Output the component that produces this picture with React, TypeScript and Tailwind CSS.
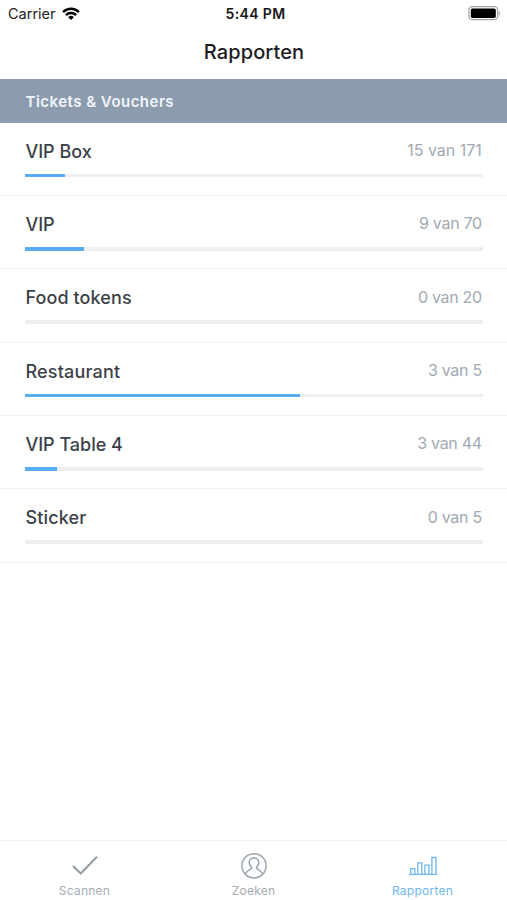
import type { ReactNode } from "react";

type Report = {
  name: string;
  scanned: number;
  total: number;
  nameClass: string;
  countClass: string;
};

const reports: Report[] = [
  { name: "VIP Box", scanned: 15, total: 171, nameClass: "", countClass: "" },
  { name: "VIP", scanned: 9, total: 70, nameClass: "", countClass: "tracking-[-0.3px]" },
  { name: "Food tokens", scanned: 0, total: 20, nameClass: "tracking-[0.1px]", countClass: "tracking-[-0.3px]" },
  { name: "Restaurant", scanned: 3, total: 5, nameClass: "tracking-[0.2px]", countClass: "tracking-[-0.3px]" },
  { name: "VIP Table 4", scanned: 3, total: 44, nameClass: "", countClass: "tracking-[-0.3px]" },
  { name: "Sticker", scanned: 0, total: 5, nameClass: "tracking-[0.15px]", countClass: "tracking-[-0.3px]" },
];

function WifiIcon() {
  return (
    <svg width="18" height="14" viewBox="0 0 18 14" fill="none" stroke="#000" strokeWidth="2.4">
      <path d="M1.1 5.1a11 11 0 0 1 15.8 0" />
      <path d="M3.9 8.1a7.2 7.2 0 0 1 10.2 0" />
      <path d="M9 13 6.2 10.2a4 4 0 0 1 5.6 0Z" fill="#000" stroke="none" />
    </svg>
  );
}

function BatteryIcon() {
  return (
    <svg width="33" height="15" viewBox="0 0 33 15" fill="none">
      <rect x="0.9" y="0.7" width="28.8" height="13" rx="3.6" stroke="#a5a5a5" strokeWidth="1.2" />
      <rect x="2.8" y="2.5" width="25" height="9.4" rx="1.6" fill="#000" />
      <path d="M30.8 5c1.6.6 1.6 4 0 4.6Z" fill="#a5a5a5" />
    </svg>
  );
}

function CheckIcon() {
  return (
    <svg width="28" height="28" viewBox="0 0 28 28" fill="none" stroke="#929da8" strokeWidth="2.1">
      <path d="M2 14 9.7 21.6 26 4.7" />
    </svg>
  );
}

function PersonIcon() {
  return (
    <svg width="28" height="28" viewBox="0 0 28 28" fill="none" stroke="#9aa4ad" strokeWidth="1.5">
      <circle cx="14" cy="13.8" r="12.1" />
      <path d="M5.8 21.3C7.2 19 9.2 18 10.9 16.9c1-.6.9-1.5.1-2.4-1.2-1.3-1.8-2.6-1.8-4.1 0-2.5 2-4.3 4.8-4.3s4.8 1.8 4.8 4.3c0 1.5-.6 2.8-1.8 4.1-.8.9-.9 1.8.1 2.4 1.7 1.1 3.7 2.1 5.1 4.4" />
    </svg>
  );
}

function ChartIcon() {
  return (
    <svg width="28" height="28" viewBox="0 0 28 28" fill="none" stroke="#6db6f2" strokeWidth="1.3">
      <path d="M0 22.3h28M1.8 22.3v-5.7h4v5.7M8.7 22.3V10.9h4.1v11.4M15.9 22.3v-9.2h4v9.2M22.9 22.3V5.5h4.1v16.8" />
    </svg>
  );
}

function ReportRow({ report }: { report: Report }) {
  return (
    <li className="flex h-[73.35px] flex-col border-b border-[#eff0f2] pt-[15px] pr-[24.4px] pl-[25.4px]">
      <div className="flex h-7 items-center justify-between">
        <span className={`pb-px text-[18px] font-medium text-[#3c4148] ${report.nameClass}`}>{report.name}</span>
        <span className={`pr-[0.8px] pb-[3px] text-[16px] text-[#a1a9b2] ${report.countClass}`}>
          {report.scanned} van {report.total}
        </span>
      </div>
      <div className="mt-[8.2px] h-[3.5px] bg-[#eceef0]">
        <div className="h-full bg-[#56acf6]" style={{ width: `${(report.scanned / report.total) * 100}%` }} />
      </div>
    </li>
  );
}

function TabItem({ icon, label, active = false }: { icon: ReactNode; label: string; active?: boolean }) {
  return (
    <button
      className={`flex flex-1 flex-col items-center pt-[11px] text-[12px] leading-4 tracking-[0.25px] ${
        active ? "text-[#6db6f2]" : "text-[#a3abb3]"
      }`}
    >
      {icon}
      <span className="mt-[3px]">{label}</span>
    </button>
  );
}

export default function App() {
  return (
    <div className="flex h-screen w-full flex-col overflow-hidden bg-white font-['Inter',sans-serif]">
      <header className="h-[79px] shrink-0">
        <div className="grid h-7 grid-cols-3 items-center text-black">
          <div className="flex items-center gap-1.5 pb-px pl-2">
            <span className="text-[14.5px] text-[#222]">Carrier</span>
            <WifiIcon />
          </div>
          <span className="pb-0.5 pl-1 text-center text-[14px] font-semibold tracking-[0.35px] text-[#161616]">
            5:44 PM
          </span>
          <div className="flex justify-end pr-[6px] pb-[2px]">
            <BatteryIcon />
          </div>
        </div>
        <h1 className="flex h-12 items-center justify-center pl-px text-[20px] font-medium tracking-[0.1px] text-[#1c1c1e]">
          Rapporten
        </h1>
      </header>

      <h2 className="flex h-[43.5px] shrink-0 items-center bg-[#8c9cae] px-[25.5px] pt-[2px] text-[15px] font-semibold tracking-[0.48px] text-[#f0f5fb]">
        Tickets &amp; Vouchers
      </h2>
      <ul className="flex-1">
        {reports.map((report) => (
          <ReportRow key={report.name} report={report} />
        ))}
      </ul>

      <nav className="flex h-[60px] shrink-0 border-t border-[#eceef0]">
        <TabItem icon={<CheckIcon />} label="Scannen" />
        <TabItem icon={<PersonIcon />} label="Zoeken" />
        <TabItem icon={<ChartIcon />} label="Rapporten" active />
      </nav>
    </div>
  );
}
